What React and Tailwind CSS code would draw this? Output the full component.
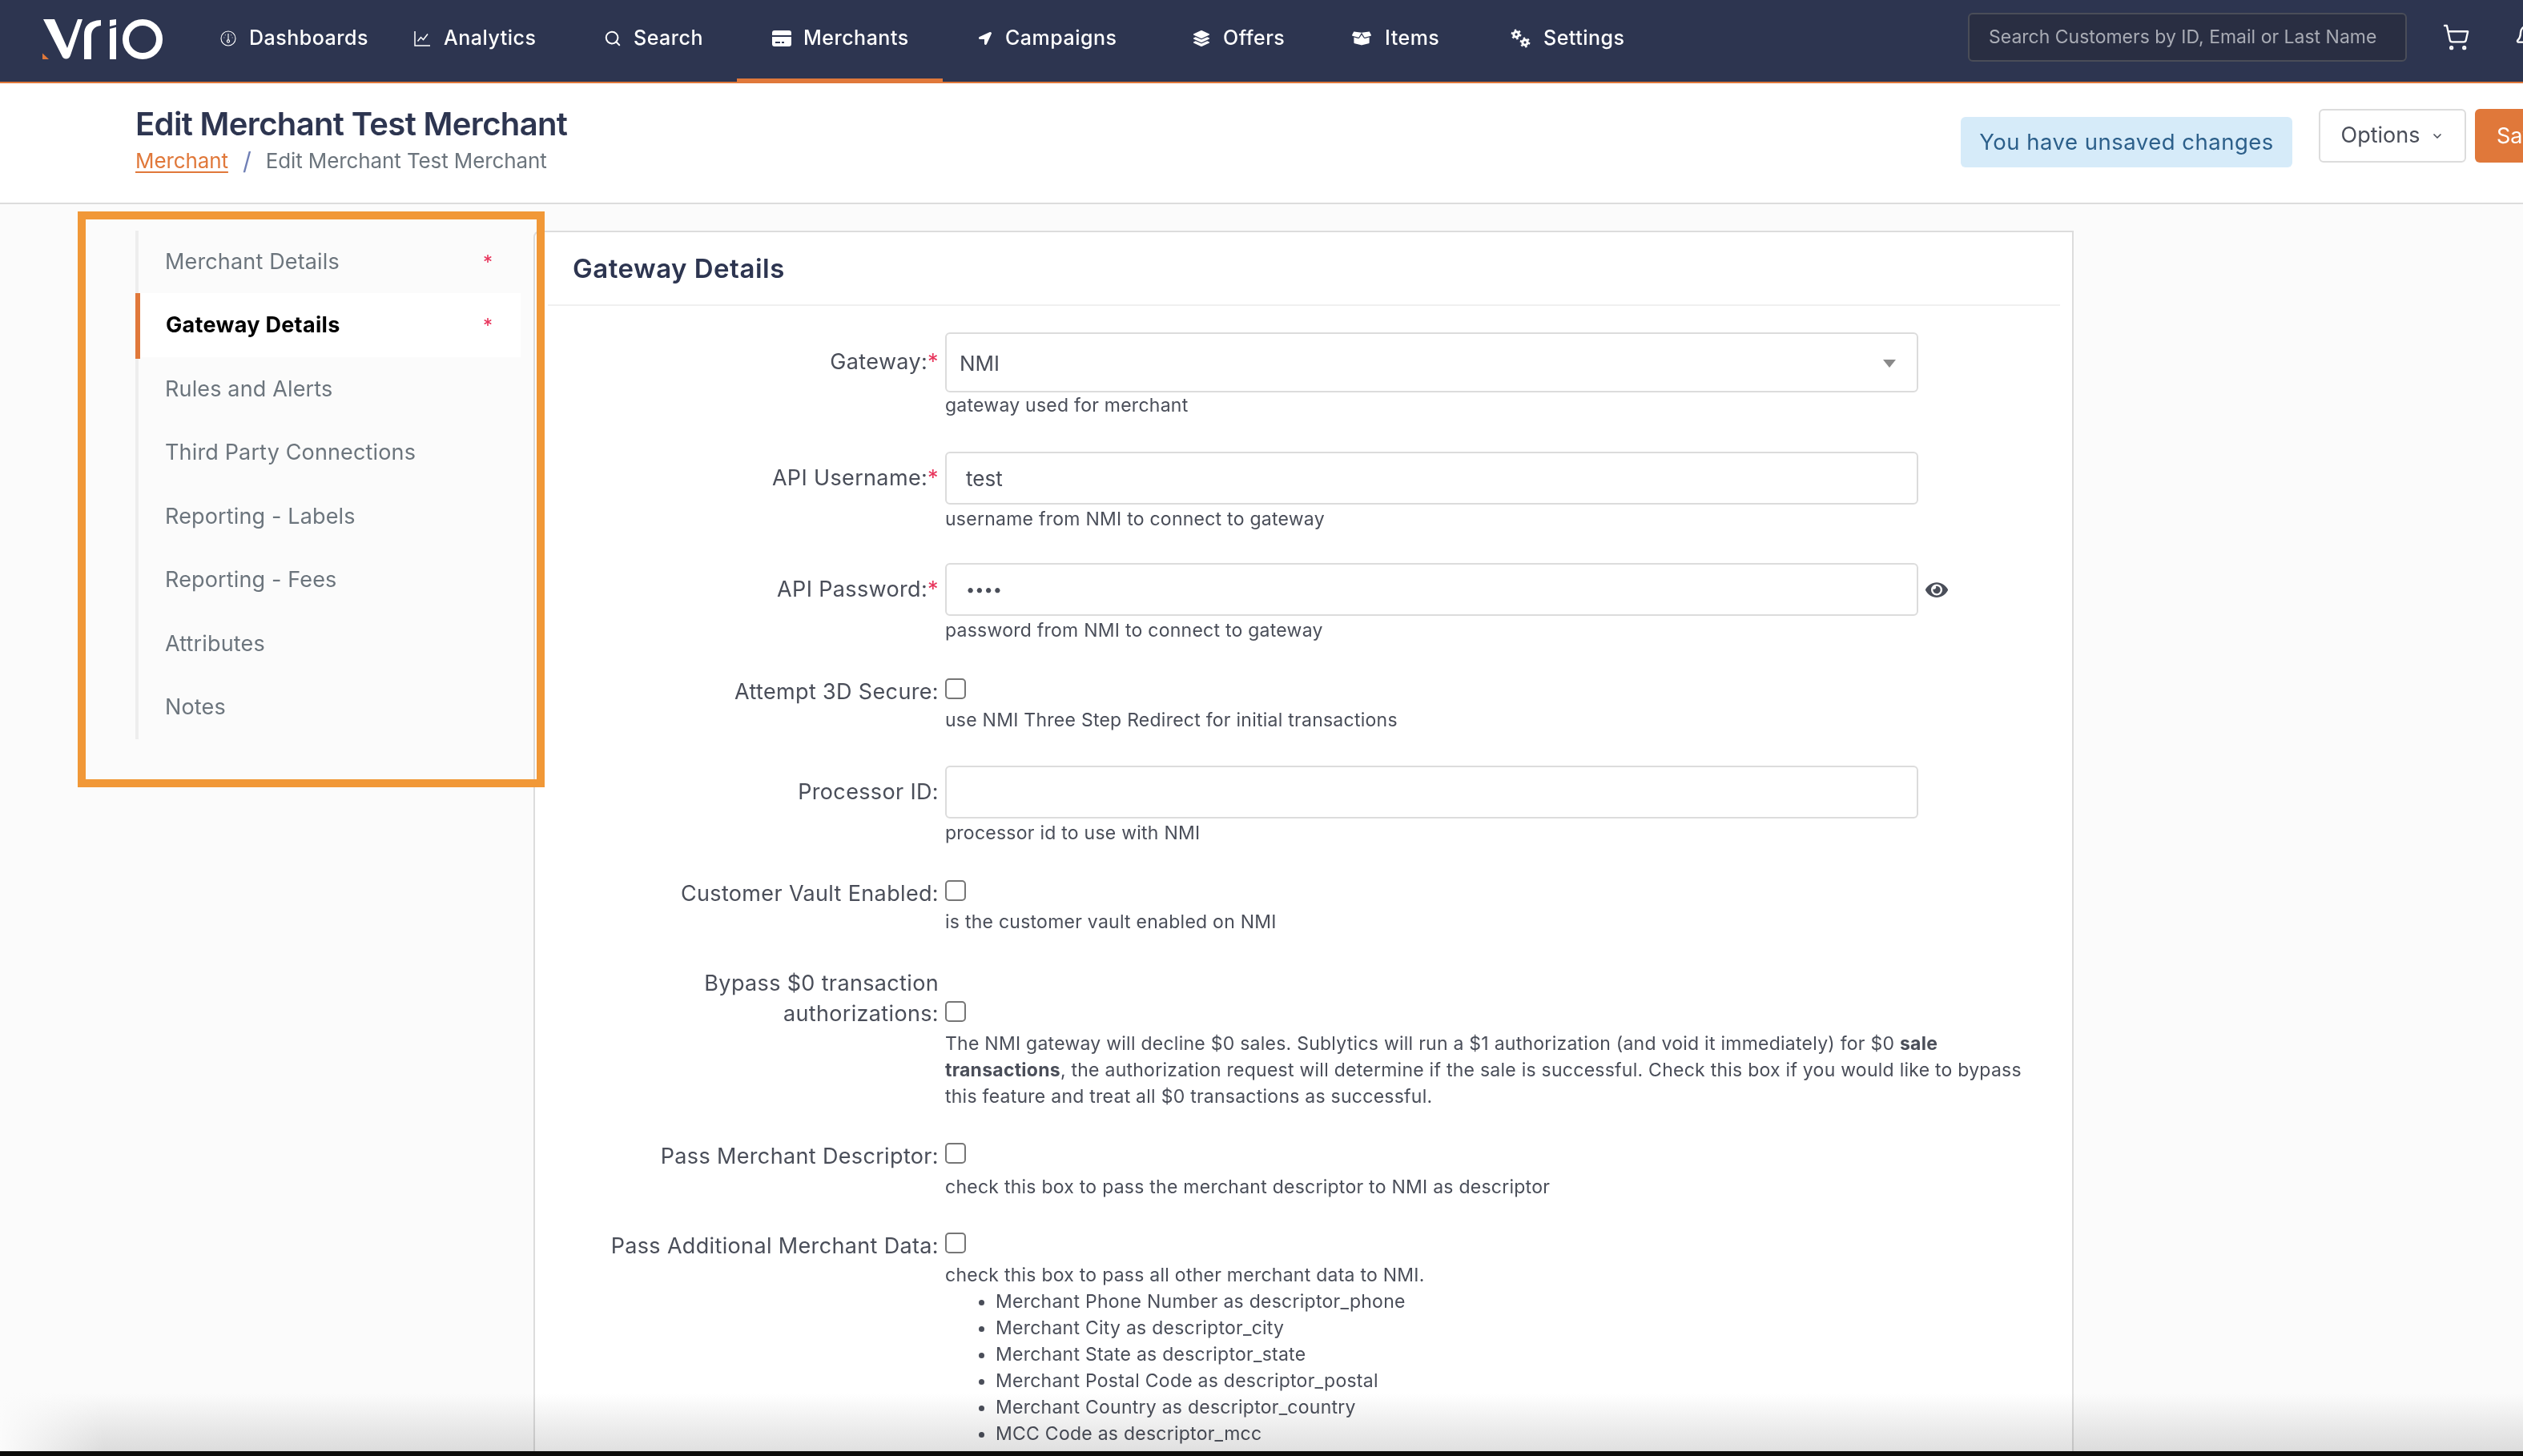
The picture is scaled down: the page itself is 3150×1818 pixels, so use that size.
import { FaEye, FaLayerGroup, FaLocationArrow, FaBoxOpen, FaAsterisk } from "react-icons/fa";
import { Bell, ChevronDown, Search, ShoppingCart } from "lucide-react";

const navItems = [
  { label: "Dashboards", icon: <Gauge />, width: "w-[242px]", box: "w-[36px]" },
  { label: "Analytics", icon: <ChartIcon />, width: "w-[237px]", box: "w-[37px]" },
  { label: "Search", icon: <Search className="size-[22px]" strokeWidth={2.2} />, width: "w-[210px]", box: "w-[37px]" },
  { label: "Merchants", icon: <CardIcon />, width: "w-[258px]", box: "w-[39px]", active: true },
  { label: "Campaigns", icon: <FaLocationArrow className="size-[16px]" />, width: "w-[268px]", box: "w-[33px]" },
  { label: "Offers", icon: <FaLayerGroup className="size-[20px]" />, width: "w-[198px]", box: "w-[37px]" },
  { label: "Items", icon: <FaBoxOpen className="size-[24px]" />, width: "w-[198px]", box: "w-[41px]" },
  { label: "Settings", icon: <GearsIcon />, width: "w-[160px]", box: "w-[41px]" },
];

const sideItems = [
  { label: "Merchant Details", required: true, height: "h-[78px]" },
  { label: "Gateway Details", required: true, active: true },
  { label: "Rules and Alerts" },
  { label: "Third Party Connections" },
  { label: "Reporting - Labels" },
  { label: "Reporting - Fees" },
  { label: "Attributes" },
  { label: "Notes" },
];

const descriptorList = [
  "Merchant Phone Number as descriptor_phone",
  "Merchant City as descriptor_city",
  "Merchant State as descriptor_state",
  "Merchant Postal Code as descriptor_postal",
  "Merchant Country as descriptor_country",
  "MCC Code as descriptor_mcc",
];

function Gauge() {
  return (
    <svg viewBox="0 0 20 20" className="size-[20px]" fill="none" stroke="currentColor" strokeWidth="1.1">
      <circle cx="10" cy="10" r="9" />
      <path d="M10 4v8" />
      <circle cx="10" cy="13.5" r="1.6" />
      <path d="M4.5 9h.8M14.7 9h.8M6 5.5l.5.5M14 5.5l-.5.5" />
    </svg>
  );
}

function ChartIcon() {
  return (
    <svg viewBox="0 0 21 20" className="h-[20px] w-[21px]" fill="none" stroke="currentColor" strokeWidth="1.5">
      <path d="M1 1v18h19" />
      <path d="M4.5 13.5l4-5 3 3 5.5-7" />
    </svg>
  );
}

function CardIcon() {
  return (
    <svg viewBox="0 0 24 20" className="h-[20px] w-[24px]" fill="currentColor">
      <path d="M3 0h18a3 3 0 0 1 3 3v3H0V3a3 3 0 0 1 3-3z" />
      <path d="M0 8h24v9a3 3 0 0 1-3 3H3a3 3 0 0 1-3-3V8zm4 6v2h6v-2H4zm8 0v2h3v-2h-3z" fillRule="evenodd" />
    </svg>
  );
}

function GearsIcon() {
  return (
    <svg viewBox="0 0 25 25" className="size-[25px]" fill="none" stroke="currentColor">
      <circle cx="7" cy="7" r="3.2" strokeWidth="3" />
      <circle cx="7" cy="7" r="5.2" strokeWidth="2.4" strokeDasharray="2.4 3" />
      <circle cx="18" cy="17" r="3.2" strokeWidth="3" />
      <circle cx="18" cy="17" r="5.2" strokeWidth="2.4" strokeDasharray="2.4 3" />
    </svg>
  );
}

function Logo() {
  return (
    <svg viewBox="0 0 150 50" className="h-[50px] w-[150px]">
      <path d="M0 42.5L8 50H0z" fill="#e0783a" />
      <path d="M1 0h14l16 36L44 0h6L35 45c-2 6-9 6-11 0z" fill="#fff" />
      <path d="M52 50V20C52 8 58 2 73 1v7c-8 1-12 5-12 13v29z" fill="#fff" />
      <path d="M84 12l8-2v40h-8zM84 1l8-1v7l-8 2z" fill="#fff" />
      <circle cx="125" cy="25" r="21" fill="none" stroke="#fff" strokeWidth="8" />
    </svg>
  );
}

function Checkbox() {
  return <span className="block size-[26px] shrink-0 rounded-[5px] border-2 border-[#767676] bg-white" />;
}

function Label({ children, required, className = "" }) {
  return (
    <label className={"w-[1172px] shrink-0 pl-[680px] text-right text-[27px] leading-[38px] tracking-[0.35px] text-[#4a4e59] " + className}>
      {children}
      {required && <span className="text-[#e8365d]">*</span>}
    </label>
  );
}

function Help({ children, className = "" }) {
  return <p className={"text-[23px] leading-[33px] tracking-[0.25px] whitespace-nowrap text-[#4a4e59] " + className}>{children}</p>;
}

function TextRow({ label, required, value, help, extra, rowClass }) {
  return (
    <div className={"flex " + rowClass}>
      <Label required={required} className="pt-[14px]">{label}</Label>
      <div className="ml-2">
        <div className="flex items-center">
          <div className="flex h-[66px] w-[1215px] items-center rounded-[6px] border-2 border-[#dcdcdc] bg-white pl-[24px] text-[26px] text-[#4a4e59]">
            {value}
          </div>
          {extra}
        </div>
        <Help className="mt-[2px]">{help}</Help>
      </div>
    </div>
  );
}

function CheckRow({ label, help, rowClass }) {
  return (
    <div className={"flex " + rowClass}>
      <Label className="pt-[1px]">{label}</Label>
      <div className="ml-2">
        <div className="pt-[3px]"><Checkbox /></div>
        {help}
      </div>
    </div>
  );
}

export default function App() {
  return (
    <div className="relative h-[1818px] w-[3150px] overflow-hidden bg-[#fbfbfb] font-['Inter','Liberation_Sans',sans-serif]">
      <header className="flex h-[104px] items-stretch border-b-2 border-[#e0783a] bg-[#2d3550] text-white">
        <div className="flex w-[275px] shrink-0 items-center pb-[4px] pl-[53px]">
          <Logo />
        </div>
        <nav className="flex items-stretch">
          {navItems.map((item) => (
            <a key={item.label} className={"relative flex items-center pb-[6px] text-[25px] font-medium tracking-[0.5px] " + item.width}>
              <span className={"flex shrink-0 items-center " + item.box}>{item.icon}</span>
              <span>{item.label}</span>
              {item.active && <span className="absolute bottom-[-2px] left-[-44px] h-[6px] w-[257px] bg-[#e0783a]" />}
            </a>
          ))}
        </nav>
        <div className="mt-[16px] ml-[411px] flex h-[61px] w-[548px] shrink-0 items-center rounded-[6px] border-2 border-[#4a4d58] bg-[#292e42] pl-[24px] text-[23px] text-[#a9acb5]">
          Search Customers by ID, Email or Last Name
        </div>
        <ShoppingCart className="mt-[29px] ml-[44px] size-[35px] shrink-0" strokeWidth={1.6} />
        <Bell className="mt-[30px] ml-[55px] size-[32px] shrink-0" strokeWidth={1.8} />
      </header>

      <div className="flex h-[151px] items-start justify-between border-b-2 border-[#dcdcdc] bg-white pl-[169px]">
        <div className="pt-[26px]">
          <h1 className="text-[40px] leading-[50px] font-semibold tracking-[-0.65px] text-[#2d3550]">Edit Merchant Test Merchant</h1>
          <div className="mt-[2px] flex items-center text-[26px] leading-[38px] tracking-[-0.1px] text-[#6c757d]">
            <a className="text-[#e0783a] underline underline-offset-4">Merchant</a>
            <span className="mx-[18px] text-[30px] text-[#6f7fb5]">/</span>
            <span>Edit Merchant Test Merchant</span>
          </div>
        </div>
        <div className="flex items-start">
          <div className="mt-[42px] flex h-[63px] w-[414px] items-center justify-center rounded-[6px] bg-[#d6ebf9] text-[27.5px] tracking-[0.5px] text-[#2c5f8a]">
            You have unsaved changes
          </div>
          <button className="mt-[32px] ml-[33px] flex h-[67px] w-[184px] items-center justify-center gap-[14px] rounded-[6px] border-2 border-[#dcdcdc] bg-white text-[27px] text-[#4a4e59]">
            Options
            <ChevronDown className="size-[16px]" strokeWidth={2.5} />
          </button>
          <button className="mt-[32px] ml-[11px] flex h-[67px] w-[60px] justify-start overflow-hidden rounded-l-[6px] bg-[#e0783a] pt-[14px] pl-[27px] text-[27px] text-white">
            Save
          </button>
        </div>
      </div>

      <div className="flex">
        <aside className="w-[667px] shrink-0 pt-[33px] pl-[169px]">
          <ul className="w-[481px] border-l-4 border-[#eeeeee]">
            {sideItems.map((item) => (
              <li
                key={item.label}
                className={
                  item.active
                    ? "relative flex h-[80px] items-center justify-between bg-white pr-[36px] pl-[34px] text-[27px] font-bold tracking-[0.3px] text-black"
                    : "flex items-center justify-between pr-[36px] pl-[33px] text-[27px] tracking-[0.15px] text-[#6c757d] " + (item.height || "h-[79.5px]")
                }
              >
                {item.active && <span className="absolute top-0 left-[-4px] h-[82px] w-[6px] bg-[#e0783a]" />}
                <span>{item.label}</span>
                {item.required && <FaAsterisk className="mb-[8px] size-[10px] text-[#e8365d]" />}
              </li>
            ))}
          </ul>
        </aside>

        <main className="-ml-px mt-[33px] h-[1600px] w-[1923px] rounded-tl-[8px] border-t-2 border-r-2 border-l-2 border-[#dcdcdc] bg-white">
          <div className="relative -ml-[668px] w-[2590px]">
            <h2 className="mr-[18px] ml-[684px] h-[92px] border-b-2 border-[#f0f0f0] pt-[22px] pl-[31px] text-[33px] leading-[46px] font-semibold tracking-[0.5px] text-[#2d3550]">
              Gateway Details
            </h2>

            <div className="flex pt-[33px]">
              <Label required className="pt-[18px]">Gateway:</Label>
              <div className="ml-2">
                <div className="flex h-[75px] w-[1215px] items-center justify-between rounded-[6px] border-2 border-[#dcdcdc] bg-white pt-[2px] pr-[26px] pl-[16px] text-[26px] text-[#4a4e59]">
                  NMI
                  <span className="h-0 w-0 border-x-[8px] border-t-[10px] border-x-transparent border-t-[#8a8a8a]" />
                </div>
                <Help>gateway used for merchant</Help>
              </div>
            </div>

            <TextRow rowClass="mt-[41px]" required label="API Username:" value="test" help="username from NMI to connect to gateway" />
            <TextRow
              rowClass="mt-[38px]"
              required
              label="API Password:"
              value={<span className="text-[20px]">••••</span>}
              help="password from NMI to connect to gateway"
              extra={<FaEye className="ml-[8px] h-[25px] w-[30px] text-[#4a4e59]" />}
            />
            <CheckRow rowClass="mt-[40px]" label="Attempt 3D Secure:" help={<Help className="mt-[10px]">use NMI Three Step Redirect for initial transactions</Help>} />
            <TextRow rowClass="mt-[40px]" label="Processor ID:" value="" help="processor id to use with NMI" />
            <CheckRow rowClass="mt-[39px]" label="Customer Vault Enabled:" help={<Help className="mt-[10px]">is the customer vault enabled on NMI</Help>} />

            <div className="mt-[41px] flex">
              <Label>Bypass $0 transaction<br />authorizations:</Label>
              <div className="ml-2">
                <div className="pt-[41px]"><Checkbox /></div>
                <Help className="mt-[11px]">
                  The NMI gateway will decline $0 sales. Sublytics will run a $1 authorization (and void it immediately) for $0 <b>sale</b>
                  <br />
                  <b>transactions</b>, the authorization request will determine if the sale is successful. Check this box if you would like to bypass
                  <br />
                  this feature and treat all $0 transactions as successful.
                </Help>
              </div>
            </div>

            <CheckRow rowClass="mt-[38px]" label="Pass Merchant Descriptor:" help={<Help className="mt-[13px]">check this box to pass the merchant descriptor to NMI as descriptor</Help>} />
            <CheckRow
              rowClass="mt-[37px]"
              label="Pass Additional Merchant Data:"
              help={
                <div className="mt-[11px]">
                  <Help>check this box to pass all other merchant data to NMI.</Help>
                  <ul className="list-disc pl-[63px] text-[23px] leading-[33px] tracking-[0.25px] whitespace-nowrap text-[#4a4e59]">
                    {descriptorList.map((d) => (
                      <li key={d}>{d}</li>
                    ))}
                  </ul>
                </div>
              }
            />
          </div>
        </main>
      </div>

      {/* annotation box drawn over the sub nav */}
      <div className="absolute top-[264px] left-[97px] h-[719px] w-[583px] border-[10px] border-[#f19837]" />
      {/* bottom shadow and the black strip under the window */}
      <div className="absolute right-0 bottom-[6px] left-0 h-[72px] bg-gradient-to-b from-white to-[#e0e0e0] mix-blend-multiply">
        <div className="h-full w-[130px] bg-gradient-to-r from-white to-transparent" />
      </div>
      <div className="absolute right-0 bottom-0 left-0 h-[6px] bg-[#0c0c0a]" />
    </div>
  );
}
